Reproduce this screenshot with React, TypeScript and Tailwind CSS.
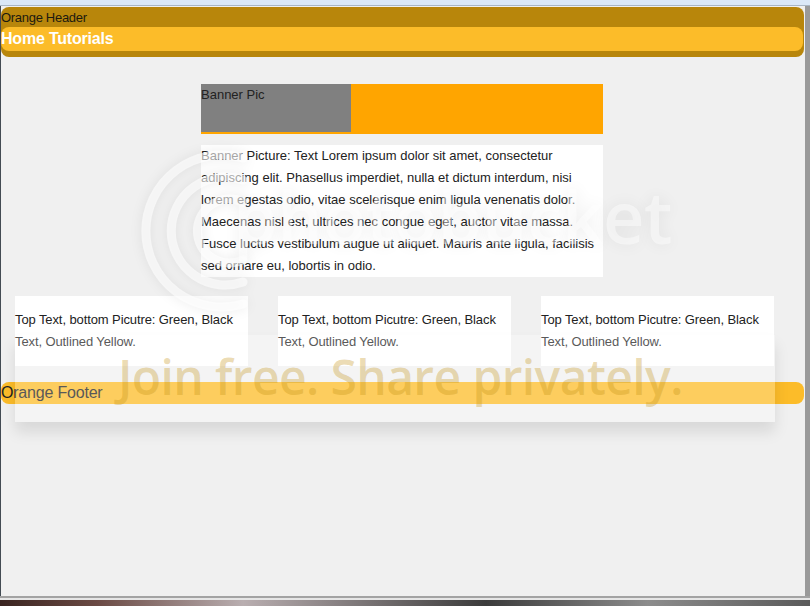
import React from "react";

const cardText = "Top Text, bottom Picutre: Green, Black Text, Outlined Yellow.";

const bannerText =
  "Banner Picture: Text Lorem ipsum dolor sit amet, consectetur adipiscing elit. Phasellus imperdiet, nulla et dictum interdum, nisi lorem egestas odio, vitae scelerisque enim ligula venenatis dolor. Maecenas nisl est, ultrices nec congue eget, auctor vitae massa. Fusce luctus vestibulum augue ut aliquet. Mauris ante ligula, facilisis sed ornare eu, lobortis in odio.";

function Watermark() {
  return (
    <div className="pointer-events-none absolute inset-0">
      {/* rings of the logo */}
      <svg
        className="absolute left-[92px] top-[140px] drop-shadow-[0_0_6px_rgba(0,0,0,0.12)]"
        width="200"
        height="170"
        viewBox="0 0 200 170"
        fill="none"
      >
        <g stroke="white" strokeOpacity="0.6" strokeWidth="9" strokeLinecap="round">
          <path d="M150 12 A76 76 0 1 0 150 158" />
          <path d="M150 34 A54 54 0 1 0 150 136" />
          <path d="M150 56 A32 32 0 1 0 150 114" />
        </g>
      </svg>
      <div className="absolute left-[232px] top-[174px] font-['Open_Sans',sans-serif] text-[72px] font-semibold leading-none tracking-[-0.5px] text-white/45 [text-shadow:0_0_16px_rgba(0,0,0,0.07)]">
        photobucket
      </div>

      {/* translucent strip */}
      <div className="absolute left-[14px] top-[329px] h-[87px] w-[760px] bg-white/25 shadow-[0_10px_14px_rgba(0,0,0,0.1)]" />
      <div className="absolute left-[117px] top-[347px] font-['Open_Sans',sans-serif] text-[48px] font-semibold leading-none tracking-[-0.6px] text-[rgba(195,145,20,0.32)]">
        Join free. Share privately.
      </div>
    </div>
  );
}

export default function App() {
  return (
    <div className="flex h-[606px] w-[810px] flex-col overflow-hidden bg-[#2e3136] font-['Liberation_Sans',Arial,sans-serif]">
      {/* window top */}
      <div className="h-[6px] border-b border-[#a9b6c4] bg-[#dbe8f7]" />

      <div className="flex h-[590px]">
        <div className="w-[1px] bg-[#434b53]" />

        {/* page */}
        <div className="relative w-[804px] bg-[#f0f0f0] text-[#222]">
          <div className="mt-[1px] h-[50px] w-[803px] rounded-[8px] bg-[#b8860b]">
            <div className="h-[20px] text-[13px] leading-[21px] tracking-[-0.3px] text-[#1c1a10]">Orange Header</div>
            <div className="h-[24px] w-[802px] rounded-[8px] bg-[#fcbc29] text-[16px] font-bold leading-[24px] tracking-[-0.2px] text-white">
              Home Tutorials
            </div>
          </div>

          <div className="ml-[200px] mt-[27px] h-[50px] w-[402px] bg-[#ffa500]">
            <div className="h-[48px] w-[150px] bg-[#808080] text-[13px] leading-[22px]">Banner Pic</div>
          </div>

          <div className="ml-[200px] mt-[11px] w-[402px] bg-white text-[13px] leading-[22px]">{bannerText}</div>

          <div className="mt-[19px] flex gap-[30px] pl-[14px]">
            {[0, 1, 2].map((i) => (
              <div key={i} className="w-[233px] bg-white">
                <p className="my-[13px] text-[13px] leading-[22px] tracking-[-0.1px]">{cardText}</p>
              </div>
            ))}
          </div>

          <div className="mt-[16px] h-[22px] w-[803px] rounded-[8px] bg-[#fcbc29] text-[16px] leading-[22px] tracking-[-0.2px]">
            Orange Footer
          </div>

          <Watermark />
        </div>

        <div className="w-[5px] bg-[#9a9a9a]" />
      </div>

      {/* window bottom */}
      <div className="h-[2px] bg-[#a3a3a3]" />
      <div className="h-[2px] bg-[#e6e6e6]" />
      <div className="h-[6px] bg-[linear-gradient(90deg,#3a2420_0%,#6b4a44_12%,#b9aeb0_30%,#3b3b3b_60%,#8c8c8c_80%,#5a5a5a_100%)]" />
    </div>
  );
}
